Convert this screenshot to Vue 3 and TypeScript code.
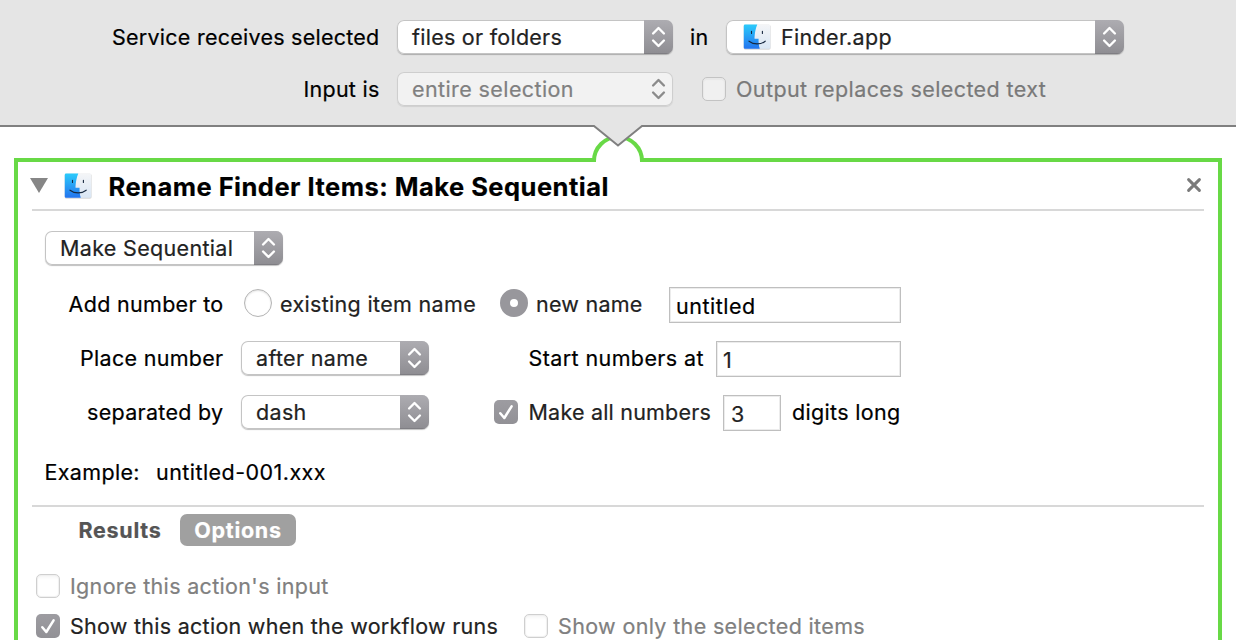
<script setup lang="ts">
import { defineComponent, h, ref } from 'vue'

const Arrows = defineComponent({
  setup: () => () =>
    h('svg', { class: 'arrows', viewBox: '0 0 29 34', width: 29, height: 34 }, [
      h('path', {
        d: 'M9.1 13.5 14.5 8 19.9 13.5M9.1 20.5 14.5 26 19.9 20.5',
        fill: 'none',
        stroke: 'currentColor',
        'stroke-width': 2.4,
        'stroke-linecap': 'round',
        'stroke-linejoin': 'round',
      }),
    ]),
})

const Tick = defineComponent({
  setup: () => () =>
    h('svg', { viewBox: '0 0 24 24', width: 24, height: 24 }, [
      h('path', {
        d: 'M6.3 13.2 10.3 18 17.6 6.3',
        fill: 'none',
        stroke: '#fff',
        'stroke-width': 2.5,
        'stroke-linecap': 'round',
        'stroke-linejoin': 'round',
      }),
    ]),
})

const FinderIcon = defineComponent({
  props: { uid: { type: String, required: true } },
  setup: (props) => () =>
    h('svg', { class: 'finder', viewBox: '0 0 28 26', width: 28, height: 26 }, [
      h('defs', [
        h('linearGradient', { id: props.uid + 'b', x1: 0, y1: 0, x2: 0, y2: 1 }, [
          h('stop', { offset: 0, 'stop-color': '#2bcbfb' }),
          h('stop', { offset: 1, 'stop-color': '#2374ee' }),
        ]),
        h('linearGradient', { id: props.uid + 'w', x1: 0, y1: 0, x2: 0, y2: 1 }, [
          h('stop', { offset: 0, 'stop-color': '#f4f5f7' }),
          h('stop', { offset: 1, 'stop-color': '#d9e6f4' }),
        ]),
      ]),
      h('rect', { x: 0.6, y: 0.8, width: 27, height: 25, rx: 1.8, fill: '#000', opacity: 0.16 }),
      h('rect', { x: 0.8, y: 0.5, width: 26.4, height: 24.3, rx: 1.3, fill: `url(#${props.uid}w)` }),
      h('path', {
        d: 'M2 .5H14.3C12.6 4.5 11.7 9 11.5 14.2Q11.5 14.7 12 14.7H15.6C15.4 18 15.8 21.6 16.8 24.8H2Q.8 24.8 .8 23.5V1.8Q.8.5 2 .5Z',
        fill: `url(#${props.uid}b)`,
      }),
      h('path', {
        d: 'M8.5 7.3V9.4M19.4 7.3V9.4M6 17.2C10.5 20.8 17.8 20.8 22.2 17.2',
        fill: 'none',
        stroke: '#17283f',
        'stroke-width': 1.1,
        'stroke-linecap': 'round',
      }),
    ]),
})

const newName = ref('untitled')
const startAt = ref('1')
const digits = ref('3')
</script>

<template>
  <div class="window">
    <header class="service">
      <div class="row first">
        <span class="label">Service receives selected</span>
        <div class="popup w276"><span class="value files">files or folders</span><span class="cap"><Arrows /></span></div>
        <span class="in">in</span>
        <div class="popup w398"><FinderIcon uid="fa" /><span class="value app">Finder.app</span><span class="cap"><Arrows /></span></div>
      </div>
      <div class="row">
        <span class="label">Input is</span>
        <div class="popup w276 disabled"><span class="value entire">entire selection</span><span class="cap"><Arrows /></span></div>
        <span class="check off gray"></span>
        <span class="dim output">Output replaces selected text</span>
      </div>
    </header>

    <svg class="notch" viewBox="0 0 60 40" width="60" height="40">
      <path d="M8 33h44v6H8z" fill="#fff" />
      <path d="M6 37V36A24 24 0 0 1 54 36V37" fill="none" stroke="#68d946" stroke-width="4" />
      <path d="M0 0H60V1H54L30 20.5L6 1H0Z" fill="#e5e5e5" />
      <path d="M0 1H6L30 20.5L54 1H60" fill="none" stroke="#808080" stroke-width="2" />
    </svg>

    <section class="action">
      <div class="title-bar">
        <svg class="triangle" width="18" height="15" viewBox="0 0 18 15"><path d="M0 0H18L9 15Z" fill="#868686" /></svg>
        <FinderIcon uid="fb" />
        <h1>Rename Finder Items: Make Sequential</h1>
        <svg class="close" width="16" height="16" viewBox="0 0 16 16"><path d="M2.6 2.6 13.4 13.4M13.4 2.6 2.6 13.4" stroke="#7b7b7b" stroke-width="3" stroke-linecap="round" /></svg>
      </div>

      <div class="mode popup"><span class="value">Make Sequential</span><span class="cap"><Arrows /></span></div>

      <div class="form">
        <div class="line">
          <span class="name">Add number to</span>
          <span class="radio"></span><span class="soft existing">existing item name</span>
          <span class="radio on"></span><span class="soft new">new name</span>
          <span class="field w232">{{ newName }}</span>
        </div>
        <div class="line">
          <span class="name">Place number</span>
          <div class="popup w188"><span class="value">after name</span><span class="cap"><Arrows /></span></div>
          <span class="start">Start numbers at</span>
          <span class="field w185 soft">{{ startAt }}</span>
        </div>
        <div class="line">
          <span class="name">separated by</span>
          <div class="popup w188"><span class="value">dash</span><span class="cap"><Arrows /></span></div>
          <span class="check on all"><Tick /></span>
          <span class="soft make">Make all numbers</span>
          <span class="field w58 soft">{{ digits }}</span>
          <span class="long">digits long</span>
        </div>
      </div>

      <div class="example"><span class="example-label">Example:</span><span class="example-value">untitled-001.xxx</span></div>

      <div class="tabs"><span class="tab">Results</span><span class="tab active">Options</span></div>

      <div class="options">
        <div class="option"><span class="check off"></span><span class="dim ignore">Ignore this action's input</span></div>
        <div class="option">
          <span class="check on"><Tick /></span><span class="soft show">Show this action when the workflow runs</span>
          <span class="check off"></span><span class="dim only">Show only the selected items</span>
        </div>
      </div>
    </section>
  </div>
</template>

<style>
body { margin: 0; background: #fff; }
</style>

<style scoped>
* { box-sizing: border-box; }
.window {
  position: relative;
  width: 1236px;
  height: 640px;
  overflow: hidden;
  background: #fff;
  font: 400 21.5px/34px Inter, "Liberation Sans", sans-serif;
  letter-spacing: 0.33px;
  -webkit-text-stroke: 0.2px currentColor;
  white-space: nowrap;
  color: #000;
}
.service {
  height: 127px;
  padding-top: 20px;
  background: #e5e5e5;
  border-bottom: 2px solid #808080;
}
.row { display: flex; align-items: center; height: 34px; }
.row.first { margin-bottom: 18px; }
.label { width: 379.5px; margin-right: 17.5px; text-align: right; letter-spacing: 0.25px; }
.in { width: 53px; padding-left: 17px; }
.popup {
  display: flex;
  flex: none;
  height: 34px;
  overflow: hidden;
  background: #fff;
  border-radius: 7px;
  box-shadow: inset 0 0 0 1px #c4c4c4, 0 1px 1px #00000040;
}
.value { flex: 1; padding-left: 15px; color: #222; }
.cap {
  width: 29px;
  height: 34px;
  color: #fff;
  background: linear-gradient(#adacb1, #8e8d92);
  box-shadow: inset 0 -1px #7f7e83;
}
:deep(svg) { display: block; flex: none; }
.w276 { width: 276px; }
.w398 { width: 398px; }
.w188 { width: 188px; margin-left: 17.5px; }
.w398 .finder { margin: 4px 0 0 17px; }
.value.app { padding-left: 10px; }
.value.files { letter-spacing: 0.26px; }
.value.entire { letter-spacing: 0.4px; }
.disabled { background: #f2f2f2; box-shadow: inset 0 0 0 1px #cecece, 0 1px 1px #00000018; }
.disabled .value { color: #808080; }
.disabled .cap { background: none; box-shadow: none; color: #8b8b8b; }
.check {
  flex: none;
  width: 24px;
  height: 24px;
  border-radius: 5px;
}
.check.off { border: 1px solid #cfcfcf; background: linear-gradient(#f5f5f5, #fff 5px); box-shadow: inset 0 0 1px 1px #f0f0f0; }
.check.off.gray { margin-left: 29px; background: #f0f0f0; border-color: #c3c3c3; box-shadow: inset 0 1px 1px 1px #e8e8e8; }
.check.on { background: linear-gradient(#9d9ca1, #929196); }
.dim { color: #808080; }
.output { margin-left: 10px; color: #797979; letter-spacing: 0.4px; }
.notch { position: absolute; left: 588px; top: 125px; z-index: 1; }
.action {
  height: 520px;
  margin: 31px 14px 0;
  padding: 0 14px;
  border: 4px solid #68d946;
}
.title-bar {
  display: flex;
  align-items: center;
  height: 49px;
  border-bottom: 2px solid #d8d8d8;
}
.triangle { margin: 0 0 1px -2px; }
.title-bar .finder { margin-left: 16px; }
h1 { flex: 1; margin: 2px 0 0 16.5px; font-size: 25.5px; font-weight: 700; letter-spacing: 0.48px; }
.close { margin: 0 2px 2px 0; }
.mode { width: 238px; margin: 20px 0 0 13px; }
.form { margin-top: 22px; }
.line { display: flex; height: 36px; margin-bottom: 18px; }
.name { width: 191.5px; text-align: right; letter-spacing: 0.3px; }
.radio {
  width: 28px;
  height: 28px;
  margin: 2px 8px 0 20.5px;
  border-radius: 50%;
  border: 1px solid #b4b4b4;
  box-shadow: inset 0 1px 2px #00000020;
}
.radio.on { margin-left: 0; border: 10px solid #98979c; background: #fff; box-shadow: none; }
.soft { color: #222; }
.existing { width: 220px; }
.new { width: 133px; letter-spacing: 0.25px; }
.field {
  height: 36px;
  padding-left: 6px;
  line-height: 36px;
  letter-spacing: 0.5px;
  border: 1px solid #bfbfbf;
  box-shadow: inset 0 0 0 1px #ececec;
}
.w232 { width: 232px; }
.w185 { width: 185px; }
.w58 { width: 58px; padding-left: 7px; }
.start { width: 287px; padding-left: 99.5px; letter-spacing: 0.4px; }
.all { margin: 5px 10.5px 0 65px; }
.make { width: 194.5px; letter-spacing: 0.2px; }
.long { margin-left: 11px; }
.example { display: flex; margin: 24px 0 16px 12.5px; }
.example-label { width: 111.5px; }
.example-value { letter-spacing: 0.45px; }
.tabs { display: flex; padding: 7px 0 0 46.5px; border-top: 2px solid #d8d8d8; font-weight: 700; line-height: 32px; letter-spacing: 0.7px; color: #555; }
.tab { width: 83px; }
.tab.active { width: 116px; margin-left: 18.5px; border-radius: 7px; background: #a0a0a0; color: #fff; text-align: center; }
.options { margin: 23px 0 0 4px; }
.option { display: flex; align-items: center; height: 34px; margin-bottom: 6px; }
.option .dim, .option .soft { margin-left: 10px; }
.show { width: 454px; letter-spacing: 0.27px; }
.only { letter-spacing: 0.35px; }
</style>
